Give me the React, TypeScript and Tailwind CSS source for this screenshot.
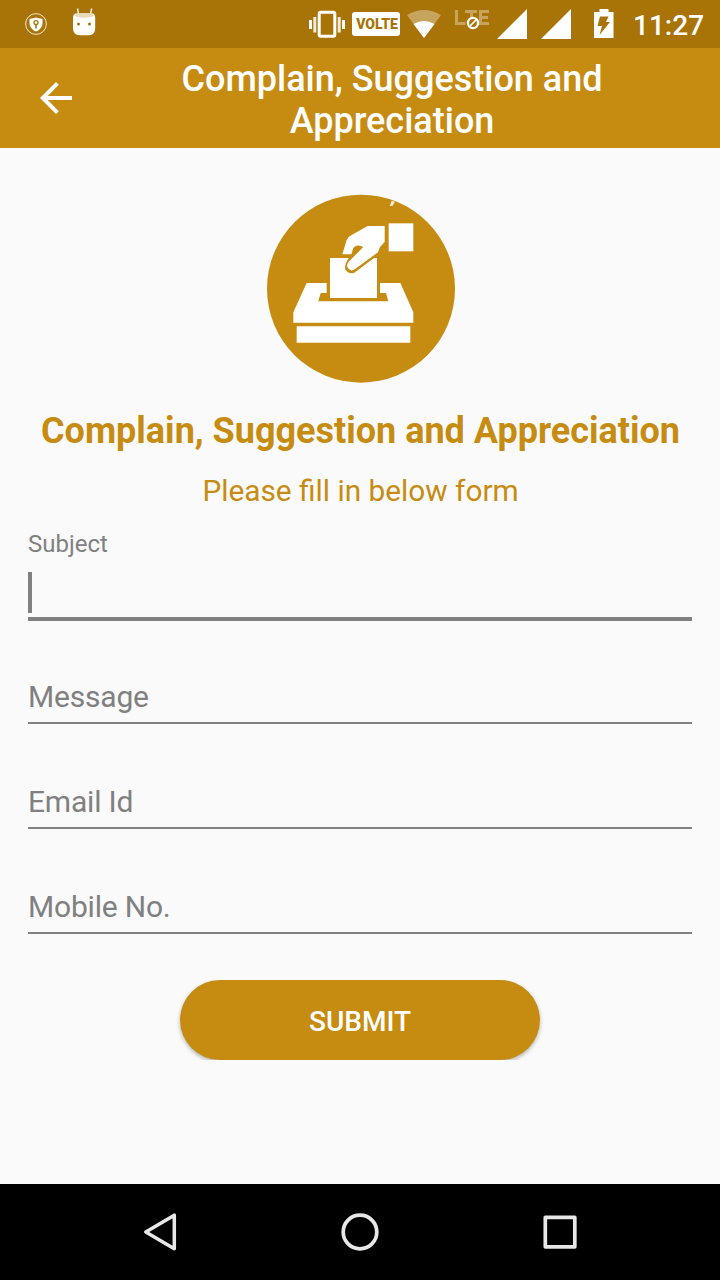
import React from 'react';

const ShieldIcon: React.FC = () => (
  <svg className="w-6 h-6" viewBox="0 0 24 24">
    <circle cx="12" cy="12" r="10.4" fill="none" stroke="#fff" strokeOpacity="0.8" strokeWidth="1" />
    <path d="M12 5.5 L18.5 7 V11 C18.5 15 15.5 18.2 12 19.5 C8.5 18.2 5.5 15 5.5 11 V7 Z" fill="#fff" />
    <circle cx="12" cy="10.6" r="2" fill="none" stroke="#a87408" strokeWidth="1.3" />
    <path d="M12 12.5 V16.5" stroke="#a87408" strokeWidth="1.6" />
  </svg>
);

const DroidIcon: React.FC = () => (
  <svg className="w-6 h-7" viewBox="0 0 24 28">
    <path d="M6.5 6 L5.5 0.5 M18.5 6 L19.7 0.5" stroke="#fff" strokeOpacity="0.9" strokeWidth="1.4" />
    <path d="M3.5 5.5 H21 Q23 6 23.2 10 V20 Q23.2 27.3 17 27.3 H7.5 Q1 27.3 1 20 V10 Q1.2 6 3.5 5.5 Z" fill="#fff" />
    <ellipse cx="12.3" cy="7.3" rx="9.5" ry="2.4" fill="#e8d9b8" />
    <circle cx="6.5" cy="16" r="1.5" fill="#a87408" />
    <circle cx="17.5" cy="16" r="1.5" fill="#a87408" />
  </svg>
);

const VibrateIcon: React.FC = () => (
  <svg className="w-9 h-7" viewBox="0 0 36 28">
    <rect x="10.2" y="2.2" width="15.6" height="24" rx="1.5" fill="none" stroke="#fff" strokeWidth="3" />
    <path d="M1.5 10 V19 M34.5 10 V19" stroke="#fff" strokeWidth="3" />
    <path d="M5.8 7 V22.5 M30.2 7 V22.5" stroke="#fff" strokeOpacity="0.85" strokeWidth="3" />
  </svg>
);

const WifiIcon: React.FC = () => (
  <svg className="w-[34px] h-7" viewBox="0 0 34 28">
    <path d="M0 5 Q17 -5 34 5 L17 28 Z" fill="#fff" fillOpacity="0.35" />
    <path d="M6.5 14 Q17 8 27.5 14 L17 28 Z" fill="#fff" />
  </svg>
);

const LteIcon: React.FC = () => (
  <svg className="w-[35px] h-[30px]" viewBox="0 0 35 30">
    <path
      d="M1.5 1 V14.5 H10.5 M10 2.5 H22 M16.5 4 V16 M34 2.5 H25.5 V14.5 H34 M27 8.5 H33"
      fill="none"
      stroke="#fff"
      strokeOpacity="0.35"
      strokeWidth="3"
    />
    <circle cx="18" cy="14" r="6.2" fill="#fff" />
    <circle cx="18" cy="14" r="3.9" fill="#a87408" />
    <path d="M15 17 L21 11" stroke="#fff" strokeWidth="1.7" />
  </svg>
);

const SignalIcon: React.FC = () => (
  <svg className="w-[30px] h-[30px]" viewBox="0 0 30 30">
    <path d="M30 0 V30 H0 Z" fill="#fff" />
  </svg>
);

const BatteryIcon: React.FC = () => (
  <svg className="w-5 h-[30px]" viewBox="0 0 20 30">
    <path d="M5.5 0 H14.5 V3 H19.5 V29 H0 V3 H5.5 Z" fill="#fff" />
    <path d="M6 7.5 H14.5 L12 13 H16 L5.5 26 L8 17 H3.5 Z" fill="#a87408" />
  </svg>
);

const StatusBar: React.FC = () => (
  <div className="h-12 bg-[#a87408] flex items-start text-white">
    <div className="mt-3 ml-6">
      <ShieldIcon />
    </div>
    <div className="mt-2 ml-6">
      <DroidIcon />
    </div>
    <div className="mt-[9.5px] ml-[213px]">
      <VibrateIcon />
    </div>
    <div className="mt-3 ml-[7px] w-12 h-6 pl-0.5 rounded-[3px] bg-white text-[#a87408] text-[14px] leading-6 font-black text-center">
      VOLTE
    </div>
    <div className="mt-2.5 ml-[7px]">
      <WifiIcon />
    </div>
    <div className="mt-[9px] ml-3.5">
      <LteIcon />
    </div>
    <div className="mt-[9px] ml-[7px]">
      <SignalIcon />
    </div>
    <div className="mt-[9px] ml-3.5">
      <SignalIcon />
    </div>
    <div className="mt-[9px] ml-[23px]">
      <BatteryIcon />
    </div>
    <span className="mt-2.5 ml-[19px] text-[28px] leading-8 font-medium whitespace-nowrap">11:27</span>
  </div>
);

const Header: React.FC = () => (
  <header className="h-[100px] bg-[#c68c12] flex items-center text-white">
    <button className="ml-8" aria-label="Back">
      <svg className="w-12 h-12" viewBox="0 0 24 24" fill="#fff">
        <path d="M20 11H7.83l5.59-5.59L12 4l-8 8 8 8 1.41-1.41L7.83 13H20v-2z" />
      </svg>
    </button>
    <h1 className="ml-16 pt-1 w-[496px] text-center text-[36px] leading-[42px] font-medium">
      Complain, Suggestion and
      <br />
      Appreciation
    </h1>
  </header>
);

const BallotLogo: React.FC = () => (
  <svg className="w-[190px] h-[190px]" viewBox="33 27 570 570">
    <circle cx="318" cy="311" r="282" fill="#c68c12" />
    <g fill="#fff">
      {/* cuff and hand */}
      <path d="M401 115 H475 V199 H401 Z" />
      <path d="M262 208 L275 165 Q279 155 290 150 L338 123 H389 V171 L375 186 L369 202 L299 253 Q288 261 279 250 Q273 240 281 230 L307 204 L324 187 Q318 180 305 182 Q297 184 294 191 L289 208 Z" />
      {/* ballot */}
      <path d="M225 219 H281 L276 229 Q267 242 272 254 Q282 269 298 263 L357 219 H366 V339 H225 Z" />
      {/* box */}
      <path d="M155 294 H215 V324 H197 L190 349 H400 L393 324 H375 V294 H436 L475 382 V413 H115 V382 Z" />
      <path d="M125 424 H466 V473 H125 Z" />
      <path d="M410 47 L420 50 L413 62 L404 63 Z" fillOpacity="0.8" />
    </g>
  </svg>
);

interface FieldProps {
  label: string;
}

const Field: React.FC<FieldProps> = ({ label }) => (
  <div className="h-[105px] flex flex-col justify-end border-b-2 border-[#808080] text-[#808080]">
    <span className="mb-2 text-[30px] leading-[35px] tracking-[-0.2px]">{label}</span>
  </div>
);

const NavigationBar: React.FC = () => (
  <nav className="h-24 bg-black flex items-center justify-center gap-[152px]">
    <svg className="w-12 h-12" viewBox="0 0 48 48" fill="none" stroke="#e8e8e8" strokeWidth="3.5" strokeLinejoin="round">
      <path d="M38.3 7.2 V40.8 L9.8 24 Z" />
    </svg>
    <svg className="w-12 h-12" viewBox="0 0 48 48" fill="none" stroke="#e8e8e8" strokeWidth="3.7">
      <circle cx="24" cy="24" r="16.8" />
    </svg>
    <svg className="w-12 h-12" viewBox="0 0 48 48" fill="none" stroke="#e8e8e8" strokeWidth="3.7" strokeLinejoin="round">
      <rect x="9.3" y="9.3" width="29.5" height="29.5" />
    </svg>
  </nav>
);

const App: React.FC = () => {
  return (
    <div className="w-[720px] h-[1280px] flex flex-col bg-[#fafafa] font-['Roboto',sans-serif] overflow-hidden">
      <StatusBar />
      <Header />
      <main className="flex-1 px-7 pt-[46px] flex flex-col">
        <div className="pl-[238px]">
          <BallotLogo />
        </div>
        <h2 className="mt-[26px] -mx-4 pl-px text-center text-[36px] leading-[42px] font-bold text-[#c68c12] whitespace-nowrap">
          Complain, Suggestion and Appreciation
        </h2>
        <p className="mt-[21px] pl-px text-center text-[29.8px] leading-[35px] text-[#c68c12]">
          Please fill in below form
        </p>

        {/* Focused field with floating label */}
        <div className="mt-[22px] border-b-4 border-[#808080]">
          <div className="text-2xl leading-7 text-[#808080]">Subject</div>
          <div className="mt-3.5 mb-1 w-1 h-[41px] bg-[#808080]" />
        </div>
        <div className="-mt-0.5">
          <Field label="Message" />
          <Field label="Email Id" />
          <Field label="Mobile No." />
        </div>

        <div className="mt-[46px] px-[152px] overflow-hidden">
          <button className="block w-[360px] h-20 pt-1 rounded-full bg-[#c68c12] text-white text-[28px] font-medium shadow-[0_2px_4px_rgba(0,0,0,0.28)]">
            SUBMIT
          </button>
        </div>
      </main>
      <NavigationBar />
    </div>
  );
};

export default App;
